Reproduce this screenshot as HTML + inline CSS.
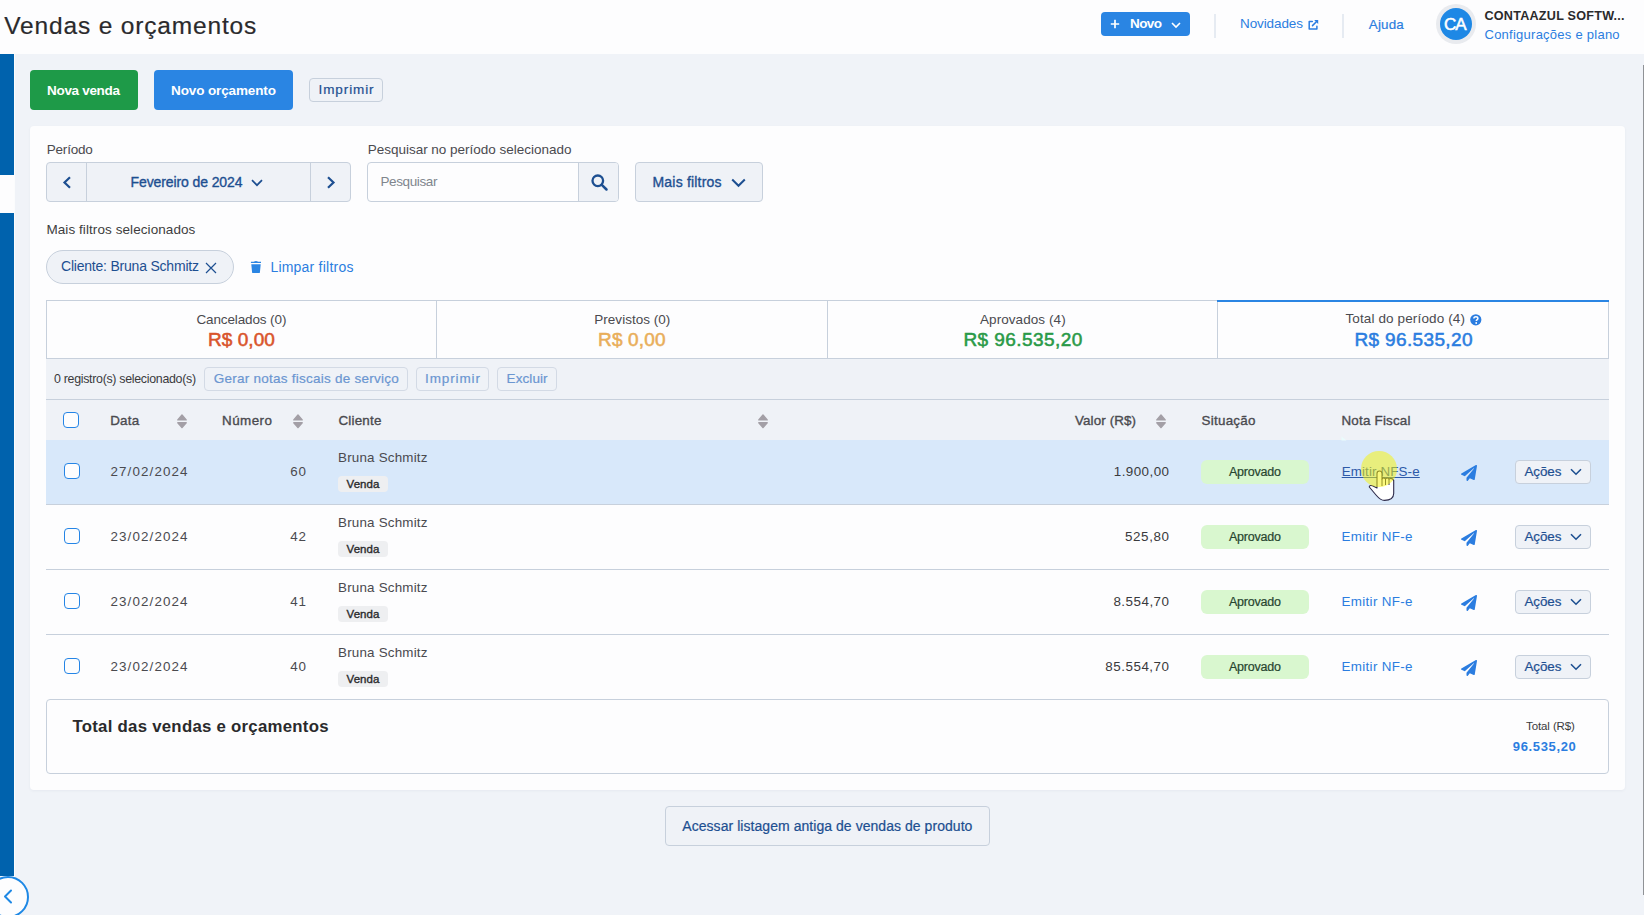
<!DOCTYPE html>
<html><head><meta charset="utf-8">
<style>
*{box-sizing:border-box;margin:0;padding:0}
html,body{width:1644px;height:915px;overflow:hidden;background:#f0f3f8;font-family:"Liberation Sans",sans-serif;color:#393a3d;position:relative}
.a{position:absolute}
.tx{position:absolute;white-space:nowrap;line-height:1}
.bd{position:absolute;border:1px solid #c7d0dc;border-radius:4px;background:#eff2f7}
svg{position:absolute;overflow:visible}
</style></head><body>
<!-- header -->
<div class="a" style="left:0;top:0;width:1644px;height:54px;background:#fdfdfe"></div>
<div class="a" style="left:1101px;top:12px;width:89px;height:24px;background:#2a85e3;border-radius:4px"></div>
<svg style="left:1110px;top:19px" width="10" height="10"><path d="M5 0.8V9.2M0.8 5H9.2" stroke="#fff" stroke-width="1.7" fill="none"/></svg>
<svg style="left:1171px;top:22px" width="10" height="6"><path d="M1 1L5 5L9 1" stroke="#fff" stroke-width="1.6" fill="none"/></svg>
<div class="a" style="left:1214px;top:14px;width:2px;height:24px;background:#e6ebf2"></div>
<svg style="left:1308px;top:20px" width="11" height="11"><path d="M4.3 1.6H1.2V9.1H8.9V6.2M4.5 5.6L8.6 1.5" stroke="#2b7de0" stroke-width="1.5" stroke-linejoin="round" stroke-linecap="round" fill="none"/><path d="M6.2 0H10.2V4Z" fill="#2b7de0"/></svg>
<div class="a" style="left:1342px;top:14px;width:2px;height:24px;background:#e6ebf2"></div>
<div class="a" style="left:1436px;top:4px;width:40px;height:40px;border-radius:50%;background:#e9ebef"></div>
<div class="a" style="left:1440px;top:8px;width:32px;height:32px;border-radius:50%;background:#1e88e5"></div>

<!-- sidebar -->
<div class="a" style="left:0;top:54px;width:14px;height:121px;background:#0062ad"></div>
<div class="a" style="left:0;top:175px;width:14px;height:38px;background:#fdfdfe"></div>
<div class="a" style="left:0;top:213px;width:14px;height:663px;background:#0062ad"></div>
<div class="a" style="left:14px;top:54px;width:1px;height:861px;background:#fbfcfd"></div>

<!-- scrollbar line -->
<div class="a" style="left:1643px;top:65px;width:1px;height:830px;background:#8f9296"></div>

<!-- top buttons -->
<div class="a" style="left:30px;top:70px;width:108px;height:40px;background:#1e9a48;border-radius:4px"></div>
<div class="a" style="left:154px;top:70px;width:139px;height:40px;background:#2a85e3;border-radius:4px"></div>
<div class="bd" style="left:309px;top:78px;width:74px;height:24px;border-radius:4px"></div>

<!-- card -->
<div class="a" style="left:30px;top:126px;width:1595px;height:664px;background:#fdfdfe;border-radius:4px;box-shadow:0 1px 3px rgba(40,60,90,0.05)"></div>

<!-- period -->
<div class="bd" style="left:46px;top:162px;width:305px;height:40px"></div>
<div class="a" style="left:86px;top:163px;width:1px;height:38px;background:#c7d0dc"></div>
<div class="a" style="left:310px;top:163px;width:1px;height:38px;background:#c7d0dc"></div>
<svg style="left:62px;top:176px" width="10" height="13"><path d="M8 1.2L2.5 6.5L8 11.8" stroke="#1d4f91" stroke-width="2.2" fill="none"/></svg>
<svg style="left:251px;top:179px" width="12" height="8"><path d="M1 1.2L6 6.2L11 1.2" stroke="#1d4f91" stroke-width="1.7" fill="none"/></svg>
<svg style="left:326px;top:176px" width="10" height="13"><path d="M2 1.2L7.5 6.5L2 11.8" stroke="#1d4f91" stroke-width="2.2" fill="none"/></svg>

<!-- search -->
<div class="bd" style="left:367px;top:162px;width:252px;height:40px;background:#fdfdfe"></div>
<div class="a" style="left:578px;top:163px;width:40px;height:38px;background:#eff2f7;border-left:1px solid #c7d0dc;border-radius:0 3px 3px 0"></div>
<svg style="left:591px;top:174px" width="17" height="17"><circle cx="6.8" cy="6.8" r="5.3" stroke="#1d4f91" stroke-width="2.3" fill="none"/><path d="M10.8 10.8L15.5 15.5" stroke="#1d4f91" stroke-width="2.5" stroke-linecap="round"/></svg>

<div class="bd" style="left:635px;top:162px;width:128px;height:40px"></div>
<svg style="left:731px;top:178px" width="15" height="10"><path d="M1.2 1.5L7.5 7.8L13.8 1.5" stroke="#1d4f91" stroke-width="2" fill="none"/></svg>

<!-- chip -->
<div class="bd" style="left:46px;top:250px;width:188px;height:34px;border-radius:17px"></div>
<svg style="left:205px;top:262px" width="12" height="12"><path d="M1 1L11 11M11 1L1 11" stroke="#1d4f91" stroke-width="1.2" fill="none"/></svg>
<svg style="left:250px;top:260px" width="12" height="14"><path d="M0.9 1.7H11V3.1H0.9Z M3.8 1.8Q5.95 0.4 8.1 1.8Z M1.3 4.3H10.7L9.9 12.4Q9.8 13.1 9 13.1H3Q2.2 13.1 2.1 12.4Z" fill="#2a85e3"/></svg>

<!-- tabs -->
<div class="a" style="left:46px;top:300px;width:1563px;height:59px;border:1px solid #c7d0dc;background:#fdfdfe"></div>
<div class="a" style="left:436px;top:301px;width:1px;height:57px;background:#c7d0dc"></div>
<div class="a" style="left:827px;top:301px;width:1px;height:57px;background:#c7d0dc"></div>
<div class="a" style="left:1217px;top:301px;width:1px;height:57px;background:#c7d0dc"></div>
<div class="a" style="left:1217px;top:300px;width:392px;height:2px;background:#2a85e3"></div>
<svg style="left:1470px;top:314.2px" width="12" height="12"><circle cx="5.8" cy="5.8" r="5.6" fill="#2b7de0"/><path d="M3.9 4.5C3.9 3.3 4.8 2.7 5.9 2.7C7 2.7 7.9 3.4 7.9 4.4C7.9 5.6 6.3 5.7 6.3 7" stroke="#fff" stroke-width="1.5" fill="none"/><circle cx="6.2" cy="9" r="0.9" fill="#fff"/></svg>

<!-- selection bar -->
<div class="a" style="left:46px;top:359px;width:1563px;height:40px;background:#eff2f7"></div>
<div class="a" style="left:204px;top:367px;width:204px;height:24px;border:1px solid #d3dae5;border-radius:4px"></div>
<div class="a" style="left:416px;top:367px;width:73px;height:24px;border:1px solid #d3dae5;border-radius:4px"></div>
<div class="a" style="left:497px;top:367px;width:60px;height:24px;border:1px solid #d3dae5;border-radius:4px"></div>

<!-- table header -->
<div class="a" style="left:46px;top:399px;width:1563px;height:41px;background:#eff2f7;border-top:1px solid #c7d0dc"></div>
<div class="a" style="left:63px;top:412px;width:16px;height:16px;border:1.5px solid #2585e6;border-radius:4px;background:#fdfdfe"></div>
<svg style="left:177px;top:414px" width="11" height="15"><path d="M0.8 5.9L5 1L9.2 5.9Z M0.8 8.7H9.2L5 13.6Z" fill="#a39fa6" stroke="#a39fa6" stroke-width="1.4" stroke-linejoin="round"/></svg>
<svg style="left:293px;top:414px" width="11" height="15"><path d="M0.8 5.9L5 1L9.2 5.9Z M0.8 8.7H9.2L5 13.6Z" fill="#a39fa6" stroke="#a39fa6" stroke-width="1.4" stroke-linejoin="round"/></svg>
<svg style="left:758px;top:414px" width="11" height="15"><path d="M0.8 5.9L5 1L9.2 5.9Z M0.8 8.7H9.2L5 13.6Z" fill="#a39fa6" stroke="#a39fa6" stroke-width="1.4" stroke-linejoin="round"/></svg>
<svg style="left:1156px;top:414px" width="11" height="15"><path d="M0.8 5.9L5 1L9.2 5.9Z M0.8 8.7H9.2L5 13.6Z" fill="#a39fa6" stroke="#a39fa6" stroke-width="1.4" stroke-linejoin="round"/></svg>

<!-- rows -->
<div class="a" style="left:46px;top:440px;width:1563px;height:64px;background:#d8e8fa"></div>
<div class="a" style="left:46px;top:504px;width:1563px;height:1px;background:#c7d0dc"></div>
<div class="a" style="left:46px;top:569px;width:1563px;height:1px;background:#c7d0dc"></div>
<div class="a" style="left:46px;top:634px;width:1563px;height:1px;background:#c7d0dc"></div>

<svg style="left:1341px;top:436px" width="6" height="5"><path d="M0.5 0.5L5.5 4.5H0.5Z" fill="#eafcfc"/></svg>
<div class="a" style="left:64px;top:463px;width:16px;height:16px;border:1.5px solid #2585e6;border-radius:4px;background:#fdfdfe"></div>
<div class="a" style="left:338px;top:476px;width:50px;height:16px;border-radius:4px;background:#eeeff1"></div>
<div class="a" style="left:1201px;top:460px;width:108px;height:24px;border-radius:6px;background:#d9f7cf"></div>
<svg style="left:1461px;top:465px" width="16" height="16" viewBox="0 0 512 512"><path d="M476 3.2L12.5 270.6c-18.1 10.4-15.8 35.6 2.2 43.2L121 358.4l287.3-253.2c5.5-4.9 13.3 2.6 8.6 8.3L176 407v80.5c0 23.6 28.5 32.9 42.5 15.8L282 426l124.6 52.2c14.2 6 30.4-2.900 33-18.2l72-432C515 7.800 493.3-6.800 476 3.200z" fill="#2b7de0"/></svg>
<div class="bd" style="left:1515px;top:460px;width:76px;height:24px"></div>
<svg style="left:1570px;top:468px" width="12" height="8"><path d="M1 1.2L6 6.2L11 1.2" stroke="#1d4f91" stroke-width="1.6" fill="none"/></svg>
<div class="a" style="left:64px;top:528px;width:16px;height:16px;border:1.5px solid #2585e6;border-radius:4px;background:#fdfdfe"></div>
<div class="a" style="left:338px;top:541px;width:50px;height:16px;border-radius:4px;background:#eeeff1"></div>
<div class="a" style="left:1201px;top:525px;width:108px;height:24px;border-radius:6px;background:#d9f7cf"></div>
<svg style="left:1461px;top:530px" width="16" height="16" viewBox="0 0 512 512"><path d="M476 3.2L12.5 270.6c-18.1 10.4-15.8 35.6 2.2 43.2L121 358.4l287.3-253.2c5.5-4.9 13.3 2.6 8.6 8.3L176 407v80.5c0 23.6 28.5 32.9 42.5 15.8L282 426l124.6 52.2c14.2 6 30.4-2.900 33-18.2l72-432C515 7.800 493.3-6.800 476 3.200z" fill="#2b7de0"/></svg>
<div class="bd" style="left:1515px;top:525px;width:76px;height:24px"></div>
<svg style="left:1570px;top:533px" width="12" height="8"><path d="M1 1.2L6 6.2L11 1.2" stroke="#1d4f91" stroke-width="1.6" fill="none"/></svg>
<div class="a" style="left:64px;top:593px;width:16px;height:16px;border:1.5px solid #2585e6;border-radius:4px;background:#fdfdfe"></div>
<div class="a" style="left:338px;top:606px;width:50px;height:16px;border-radius:4px;background:#eeeff1"></div>
<div class="a" style="left:1201px;top:590px;width:108px;height:24px;border-radius:6px;background:#d9f7cf"></div>
<svg style="left:1461px;top:595px" width="16" height="16" viewBox="0 0 512 512"><path d="M476 3.2L12.5 270.6c-18.1 10.4-15.8 35.6 2.2 43.2L121 358.4l287.3-253.2c5.5-4.9 13.3 2.6 8.6 8.3L176 407v80.5c0 23.6 28.5 32.9 42.5 15.8L282 426l124.6 52.2c14.2 6 30.4-2.900 33-18.2l72-432C515 7.800 493.3-6.800 476 3.200z" fill="#2b7de0"/></svg>
<div class="bd" style="left:1515px;top:590px;width:76px;height:24px"></div>
<svg style="left:1570px;top:598px" width="12" height="8"><path d="M1 1.2L6 6.2L11 1.2" stroke="#1d4f91" stroke-width="1.6" fill="none"/></svg>
<div class="a" style="left:64px;top:658px;width:16px;height:16px;border:1.5px solid #2585e6;border-radius:4px;background:#fdfdfe"></div>
<div class="a" style="left:338px;top:671px;width:50px;height:16px;border-radius:4px;background:#eeeff1"></div>
<div class="a" style="left:1201px;top:655px;width:108px;height:24px;border-radius:6px;background:#d9f7cf"></div>
<svg style="left:1461px;top:660px" width="16" height="16" viewBox="0 0 512 512"><path d="M476 3.2L12.5 270.6c-18.1 10.4-15.8 35.6 2.2 43.2L121 358.4l287.3-253.2c5.5-4.9 13.3 2.6 8.6 8.3L176 407v80.5c0 23.6 28.5 32.9 42.5 15.8L282 426l124.6 52.2c14.2 6 30.4-2.900 33-18.2l72-432C515 7.800 493.3-6.800 476 3.200z" fill="#2b7de0"/></svg>
<div class="bd" style="left:1515px;top:655px;width:76px;height:24px"></div>
<svg style="left:1570px;top:663px" width="12" height="8"><path d="M1 1.2L6 6.2L11 1.2" stroke="#1d4f91" stroke-width="1.6" fill="none"/></svg>

<!-- totals -->
<div class="a" style="left:46px;top:699px;width:1563px;height:75px;border:1px solid #c7d0dc;border-radius:4px"></div>

<!-- bottom button -->
<div class="bd" style="left:665px;top:806px;width:325px;height:40px"></div>

<!-- collapse circle -->
<div class="a" style="left:-13px;top:876px;width:42px;height:42px;border-radius:50%;border:2px solid #1e88e5;background:#fdfdfe"></div>
<svg style="left:3px;top:889px" width="10" height="16"><path d="M8 1.5L2 7.5L8 13.5" stroke="#1e88e5" stroke-width="2" stroke-linecap="round" stroke-linejoin="round" fill="none"/></svg>

<div class="tx" style="left:4.3px;top:14.1px;font-size:24.5px;font-weight:400;-webkit-text-stroke:0.20px #2a2a2c;color:#2a2a2c;letter-spacing:0.83px;">Vendas e orçamentos</div>
<div class="tx" style="left:1130.0px;top:16.9px;font-size:13.5px;font-weight:700;color:#fff;letter-spacing:-0.58px;">Novo</div>
<div class="tx" style="left:1240.0px;top:16.6px;font-size:13.5px;font-weight:400;color:#2b7de0;letter-spacing:-0.10px;">Novidades</div>
<div class="tx" style="left:1368.8px;top:17.6px;font-size:13.4px;font-weight:400;-webkit-text-stroke:0.20px #2b7de0;color:#2b7de0;letter-spacing:0.19px;">Ajuda</div>
<div class="tx" style="left:1444.0px;top:15.6px;font-size:17px;font-weight:400;-webkit-text-stroke:0.55px #fff;color:#fff;letter-spacing:-1.12px;">CA</div>
<div class="tx" style="left:1484.5px;top:9.8px;font-size:12.6px;font-weight:700;color:#2a2a2c;letter-spacing:0.24px;">CONTAAZUL SOFTW...</div>
<div class="tx" style="left:1484.5px;top:28.2px;font-size:13px;font-weight:400;color:#2b7de0;letter-spacing:0.25px;">Configurações e plano</div>
<div class="tx" style="left:47.0px;top:83.5px;font-size:13.5px;font-weight:700;color:#fff;letter-spacing:-0.31px;">Nova venda</div>
<div class="tx" style="left:171.0px;top:83.5px;font-size:13.5px;font-weight:700;color:#fff;letter-spacing:-0.12px;">Novo orçamento</div>
<div class="tx" style="left:318.6px;top:82.9px;font-size:13.5px;font-weight:400;-webkit-text-stroke:0.20px #1d4f91;color:#1d4f91;letter-spacing:0.89px;">Imprimir</div>
<div class="tx" style="left:46.8px;top:142.6px;font-size:13.5px;font-weight:400;color:#4a4a4f;letter-spacing:-0.22px;">Período</div>
<div class="tx" style="left:130.5px;top:174.8px;font-size:14px;font-weight:400;-webkit-text-stroke:0.35px #1d4f91;color:#1d4f91;letter-spacing:-0.10px;">Fevereiro de 2024</div>
<div class="tx" style="left:367.7px;top:142.6px;font-size:13.5px;font-weight:400;color:#4a4a4f;letter-spacing:-0.01px;">Pesquisar no período selecionado</div>
<div class="tx" style="left:380.4px;top:175.2px;font-size:13.5px;font-weight:400;color:#80858d;letter-spacing:-0.38px;">Pesquisar</div>
<div class="tx" style="left:652.5px;top:174.6px;font-size:14px;font-weight:400;-webkit-text-stroke:0.35px #1d4f91;color:#1d4f91;letter-spacing:0.19px;">Mais filtros</div>
<div class="tx" style="left:46.4px;top:222.5px;font-size:13.5px;font-weight:400;color:#3d3d40;letter-spacing:0.08px;">Mais filtros selecionados</div>
<div class="tx" style="left:61.0px;top:259.4px;font-size:14px;font-weight:400;color:#1d4f91;letter-spacing:-0.21px;">Cliente: Bruna Schmitz</div>
<div class="tx" style="left:270.4px;top:259.8px;font-size:14px;font-weight:400;color:#2b7de0;letter-spacing:0.22px;">Limpar filtros</div>
<div class="tx" style="left:196.4px;top:312.9px;font-size:13.5px;font-weight:400;color:#4a4a4f;letter-spacing:-0.12px;">Cancelados (0)</div>
<div class="tx" style="left:207.9px;top:329.8px;font-size:19px;font-weight:400;-webkit-text-stroke:0.55px #d9542b;color:#d9542b;letter-spacing:0.08px;">R$ 0,00</div>
<div class="tx" style="left:594.3px;top:312.9px;font-size:13.5px;font-weight:400;color:#4a4a4f;letter-spacing:0.02px;">Previstos (0)</div>
<div class="tx" style="left:598.0px;top:329.8px;font-size:19px;font-weight:400;-webkit-text-stroke:0.55px #e9ae5a;color:#e9ae5a;letter-spacing:0.18px;">R$ 0,00</div>
<div class="tx" style="left:980.0px;top:312.9px;font-size:13.5px;font-weight:400;color:#4a4a4f;letter-spacing:0.07px;">Aprovados (4)</div>
<div class="tx" style="left:963.4px;top:329.8px;font-size:19px;font-weight:400;-webkit-text-stroke:0.55px #2a9a48;color:#2a9a48;letter-spacing:0.45px;">R$ 96.535,20</div>
<div class="tx" style="left:1345.4px;top:312.3px;font-size:13.5px;font-weight:400;color:#4a4a4f;letter-spacing:0.13px;">Total do período (4)</div>
<div class="tx" style="left:1354.4px;top:329.8px;font-size:19px;font-weight:400;-webkit-text-stroke:0.55px #2b7de0;color:#2b7de0;letter-spacing:0.36px;">R$ 96.535,20</div>
<div class="tx" style="left:54.0px;top:372.7px;font-size:12.4px;font-weight:400;color:#3a3a3d;letter-spacing:-0.30px;">0 registro(s) selecionado(s)</div>
<div class="tx" style="left:213.8px;top:372.4px;font-size:13.5px;font-weight:400;-webkit-text-stroke:0.20px #6b96d1;color:#6b96d1;letter-spacing:0.25px;">Gerar notas fiscais de serviço</div>
<div class="tx" style="left:425.0px;top:372.4px;font-size:13.5px;font-weight:400;-webkit-text-stroke:0.20px #6b96d1;color:#6b96d1;letter-spacing:0.89px;">Imprimir</div>
<div class="tx" style="left:506.6px;top:372.4px;font-size:13.5px;font-weight:400;-webkit-text-stroke:0.20px #6b96d1;color:#6b96d1;letter-spacing:0.08px;">Excluir</div>
<div class="tx" style="left:110.2px;top:413.9px;font-size:13.4px;font-weight:400;-webkit-text-stroke:0.35px #4a4a4f;color:#4a4a4f;letter-spacing:0.23px;">Data</div>
<div class="tx" style="left:222.0px;top:413.9px;font-size:13.4px;font-weight:400;-webkit-text-stroke:0.35px #4a4a4f;color:#4a4a4f;letter-spacing:0.47px;">Número</div>
<div class="tx" style="left:338.4px;top:413.9px;font-size:13.4px;font-weight:400;-webkit-text-stroke:0.35px #4a4a4f;color:#4a4a4f;letter-spacing:0.22px;">Cliente</div>
<div class="tx" style="left:1075.0px;top:413.9px;font-size:13.4px;font-weight:400;-webkit-text-stroke:0.35px #4a4a4f;color:#4a4a4f;letter-spacing:0.11px;">Valor (R$)</div>
<div class="tx" style="left:1201.5px;top:413.9px;font-size:13.4px;font-weight:400;-webkit-text-stroke:0.35px #4a4a4f;color:#4a4a4f;letter-spacing:0.27px;">Situação</div>
<div class="tx" style="left:1341.5px;top:413.9px;font-size:13.4px;font-weight:400;-webkit-text-stroke:0.35px #4a4a4f;color:#4a4a4f;letter-spacing:0.20px;">Nota Fiscal</div>
<div class="tx" style="left:110.5px;top:464.7px;font-size:13.4px;font-weight:400;color:#4a4a4f;letter-spacing:1.11px;">27/02/2024</div>
<div class="tx" style="left:290.3px;top:464.7px;font-size:13.4px;font-weight:400;color:#4a4a4f;letter-spacing:0.79px;">60</div>
<div class="tx" style="left:338.0px;top:450.6px;font-size:13.4px;font-weight:400;color:#4a4a4f;letter-spacing:0.20px;">Bruna Schmitz</div>
<div class="tx" style="left:346.5px;top:478.7px;font-size:11.5px;font-weight:400;-webkit-text-stroke:0.35px #2a2a2c;color:#2a2a2c;letter-spacing:0.09px;">Venda</div>
<div class="tx" style="left:1113.8px;top:464.9px;font-size:13.4px;font-weight:400;color:#3a3a3d;letter-spacing:0.44px;">1.900,00</div>
<div class="tx" style="left:1229.0px;top:465.5px;font-size:12.5px;font-weight:400;-webkit-text-stroke:0.20px #27452f;color:#27452f;letter-spacing:-0.22px;">Aprovado</div>
<div class="tx" style="left:1341.7px;top:465.2px;font-size:13.4px;font-weight:400;color:#2d5aa8;letter-spacing:0.12px;text-decoration:underline">Emitir NFS-e</div>
<div class="tx" style="left:1524.4px;top:464.9px;font-size:13.4px;font-weight:400;-webkit-text-stroke:0.20px #1d4f91;color:#1d4f91;letter-spacing:-0.05px;">Ações</div>
<div class="tx" style="left:110.5px;top:529.7px;font-size:13.4px;font-weight:400;color:#4a4a4f;letter-spacing:1.11px;">23/02/2024</div>
<div class="tx" style="left:290.3px;top:529.7px;font-size:13.4px;font-weight:400;color:#4a4a4f;letter-spacing:0.79px;">42</div>
<div class="tx" style="left:338.0px;top:515.6px;font-size:13.4px;font-weight:400;color:#4a4a4f;letter-spacing:0.20px;">Bruna Schmitz</div>
<div class="tx" style="left:346.5px;top:543.7px;font-size:11.5px;font-weight:400;-webkit-text-stroke:0.35px #2a2a2c;color:#2a2a2c;letter-spacing:0.09px;">Venda</div>
<div class="tx" style="left:1125.0px;top:529.9px;font-size:13.4px;font-weight:400;color:#3a3a3d;letter-spacing:0.61px;">525,80</div>
<div class="tx" style="left:1229.0px;top:530.5px;font-size:12.5px;font-weight:400;-webkit-text-stroke:0.20px #27452f;color:#27452f;letter-spacing:-0.22px;">Aprovado</div>
<div class="tx" style="left:1341.5px;top:529.9px;font-size:13.4px;font-weight:400;color:#2b7de0;letter-spacing:0.33px;">Emitir NF-e</div>
<div class="tx" style="left:1524.4px;top:529.9px;font-size:13.4px;font-weight:400;-webkit-text-stroke:0.20px #1d4f91;color:#1d4f91;letter-spacing:-0.05px;">Ações</div>
<div class="tx" style="left:110.5px;top:594.7px;font-size:13.4px;font-weight:400;color:#4a4a4f;letter-spacing:1.11px;">23/02/2024</div>
<div class="tx" style="left:290.3px;top:594.7px;font-size:13.4px;font-weight:400;color:#4a4a4f;letter-spacing:0.79px;">41</div>
<div class="tx" style="left:338.0px;top:580.6px;font-size:13.4px;font-weight:400;color:#4a4a4f;letter-spacing:0.20px;">Bruna Schmitz</div>
<div class="tx" style="left:346.5px;top:608.7px;font-size:11.5px;font-weight:400;-webkit-text-stroke:0.35px #2a2a2c;color:#2a2a2c;letter-spacing:0.09px;">Venda</div>
<div class="tx" style="left:1113.4px;top:594.9px;font-size:13.4px;font-weight:400;color:#3a3a3d;letter-spacing:0.50px;">8.554,70</div>
<div class="tx" style="left:1229.0px;top:595.5px;font-size:12.5px;font-weight:400;-webkit-text-stroke:0.20px #27452f;color:#27452f;letter-spacing:-0.22px;">Aprovado</div>
<div class="tx" style="left:1341.5px;top:594.9px;font-size:13.4px;font-weight:400;color:#2b7de0;letter-spacing:0.33px;">Emitir NF-e</div>
<div class="tx" style="left:1524.4px;top:594.9px;font-size:13.4px;font-weight:400;-webkit-text-stroke:0.20px #1d4f91;color:#1d4f91;letter-spacing:-0.05px;">Ações</div>
<div class="tx" style="left:110.5px;top:659.7px;font-size:13.4px;font-weight:400;color:#4a4a4f;letter-spacing:1.11px;">23/02/2024</div>
<div class="tx" style="left:290.3px;top:659.7px;font-size:13.4px;font-weight:400;color:#4a4a4f;letter-spacing:0.79px;">40</div>
<div class="tx" style="left:338.0px;top:645.6px;font-size:13.4px;font-weight:400;color:#4a4a4f;letter-spacing:0.20px;">Bruna Schmitz</div>
<div class="tx" style="left:346.5px;top:673.7px;font-size:11.5px;font-weight:400;-webkit-text-stroke:0.35px #2a2a2c;color:#2a2a2c;letter-spacing:0.09px;">Venda</div>
<div class="tx" style="left:1105.3px;top:659.9px;font-size:13.4px;font-weight:400;color:#3a3a3d;letter-spacing:0.52px;">85.554,70</div>
<div class="tx" style="left:1229.0px;top:660.5px;font-size:12.5px;font-weight:400;-webkit-text-stroke:0.20px #27452f;color:#27452f;letter-spacing:-0.22px;">Aprovado</div>
<div class="tx" style="left:1341.5px;top:659.9px;font-size:13.4px;font-weight:400;color:#2b7de0;letter-spacing:0.33px;">Emitir NF-e</div>
<div class="tx" style="left:1524.4px;top:659.9px;font-size:13.4px;font-weight:400;-webkit-text-stroke:0.20px #1d4f91;color:#1d4f91;letter-spacing:-0.05px;">Ações</div>
<div class="tx" style="left:72.5px;top:719.3px;font-size:16.8px;font-weight:700;color:#2a2a2c;letter-spacing:0.26px;">Total das vendas e orçamentos</div>
<div class="tx" style="left:1526.0px;top:721.2px;font-size:11.5px;font-weight:400;color:#3a3a3d;letter-spacing:-0.10px;">Total (R$)</div>
<div class="tx" style="left:1512.8px;top:739.9px;font-size:13px;font-weight:700;color:#2b7de0;letter-spacing:0.64px;">96.535,20</div>
<div class="tx" style="left:682.3px;top:819.0px;font-size:14px;font-weight:400;-webkit-text-stroke:0.20px #1d4f91;color:#1d4f91;letter-spacing:0.05px;">Acessar listagem antiga de vendas de produto</div>

<!-- cursor -->
<svg style="left:1360px;top:465px" width="40" height="40"><path d="M17 8.5A2.5 2.5 0 0 1 22 8.5V14Q23.75 12 25.5 14Q27.25 12 29 14Q31.8 12.4 33.7 15.4V28.6Q33.5 35.4 24.5 35.4Q20.5 35.4 16 30L9.3 22Q9 20 12.5 20.8L17 23Z" fill="#fff" stroke="#2d2a4a" stroke-width="1.1" stroke-linejoin="round"/><path d="M22 14V21M25.5 14V20M29 14V20" stroke="#2d2a4a" stroke-width="1"/></svg>
<div class="a" style="left:1361px;top:451px;width:36px;height:36px;border-radius:50%;background:rgba(248,244,0,0.5)"></div>
</body></html>
